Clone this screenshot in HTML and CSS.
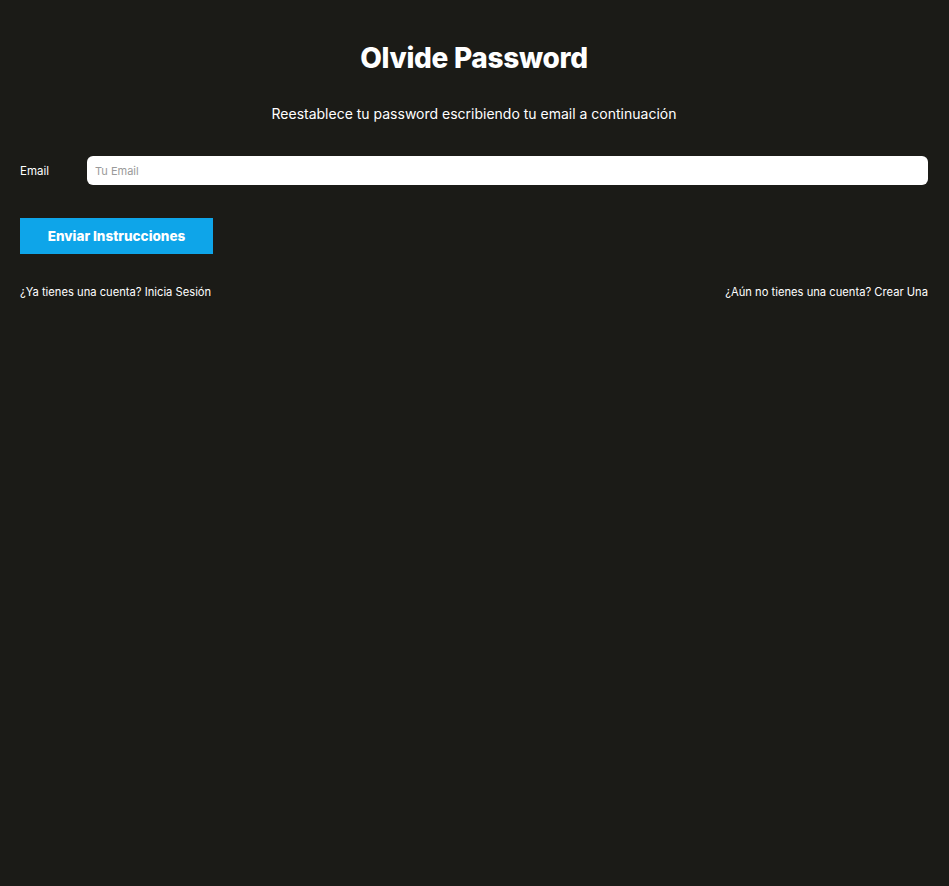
FILE: index.html
```html
<!DOCTYPE html>
<html lang="es">
<head>
<meta charset="utf-8">
<title>Olvide Password</title>
<link rel="stylesheet" href="styles.css">
</head>
<body>
<main class="page">
  <h1 class="title">Olvide Password</h1>
  <p class="subtitle">Reestablece tu password escribiendo tu email a continuación</p>
  <form class="form">
    <div class="field">
      <label class="label" for="email">Email</label>
      <input class="input" id="email" type="email" placeholder="Tu Email">
    </div>
    <button class="button" type="button">Enviar Instrucciones</button>
  </form>
  <nav class="links">
    <a class="link" href="#">¿Ya tienes una cuenta? Inicia Sesión</a>
    <a class="link" href="#">¿Aún no tienes una cuenta? Crear Una</a>
  </nav>
</main>
</body>
</html>
```

FILE: styles.css
```css
* { box-sizing: border-box; }
html, body {
  margin: 0;
  padding: 0;
  background: #1b1b17;
  height: 100%;
}
body {
  font-family: "Inter", "Open Sans", sans-serif;
  color: #ffffff;
}
.page {
  padding: 40px 21px 40px 20px;
}
.title {
  margin: 0;
  text-align: center;
  font-size: 28px;
  font-weight: 800;
  line-height: 36px;
  letter-spacing: -0.3px;
}
.subtitle {
  margin: 28px 0 0;
  text-align: center;
  font-size: 14px;
  line-height: 20px;
}
.form {
  margin-top: 32px;
}
.field {
  display: flex;
  align-items: center;
}
.label {
  width: 67px;
  font-size: 11.5px;
  flex-shrink: 0;
}
.input {
  flex: 1;
  height: 29px;
  border: none;
  border-radius: 6px;
  background: #fff;
  padding: 0 8px;
  font-family: inherit;
  font-size: 11px;
  outline: none;
}
.input::placeholder { color: #9a9a9a; }
.button {
  margin-top: 33px;
  width: 193px;
  height: 36px;
  border: none;
  background: #0ea5e9;
  color: #fff;
  font-family: inherit;
  font-weight: 800;
  font-size: 13.5px;
  display: block;
}
.links {
  margin-top: 31px;
  display: flex;
  justify-content: space-between;
}
.link {
  color: #fff;
  text-decoration: none;
  font-size: 11.2px;
  line-height: 14px;
}
```
